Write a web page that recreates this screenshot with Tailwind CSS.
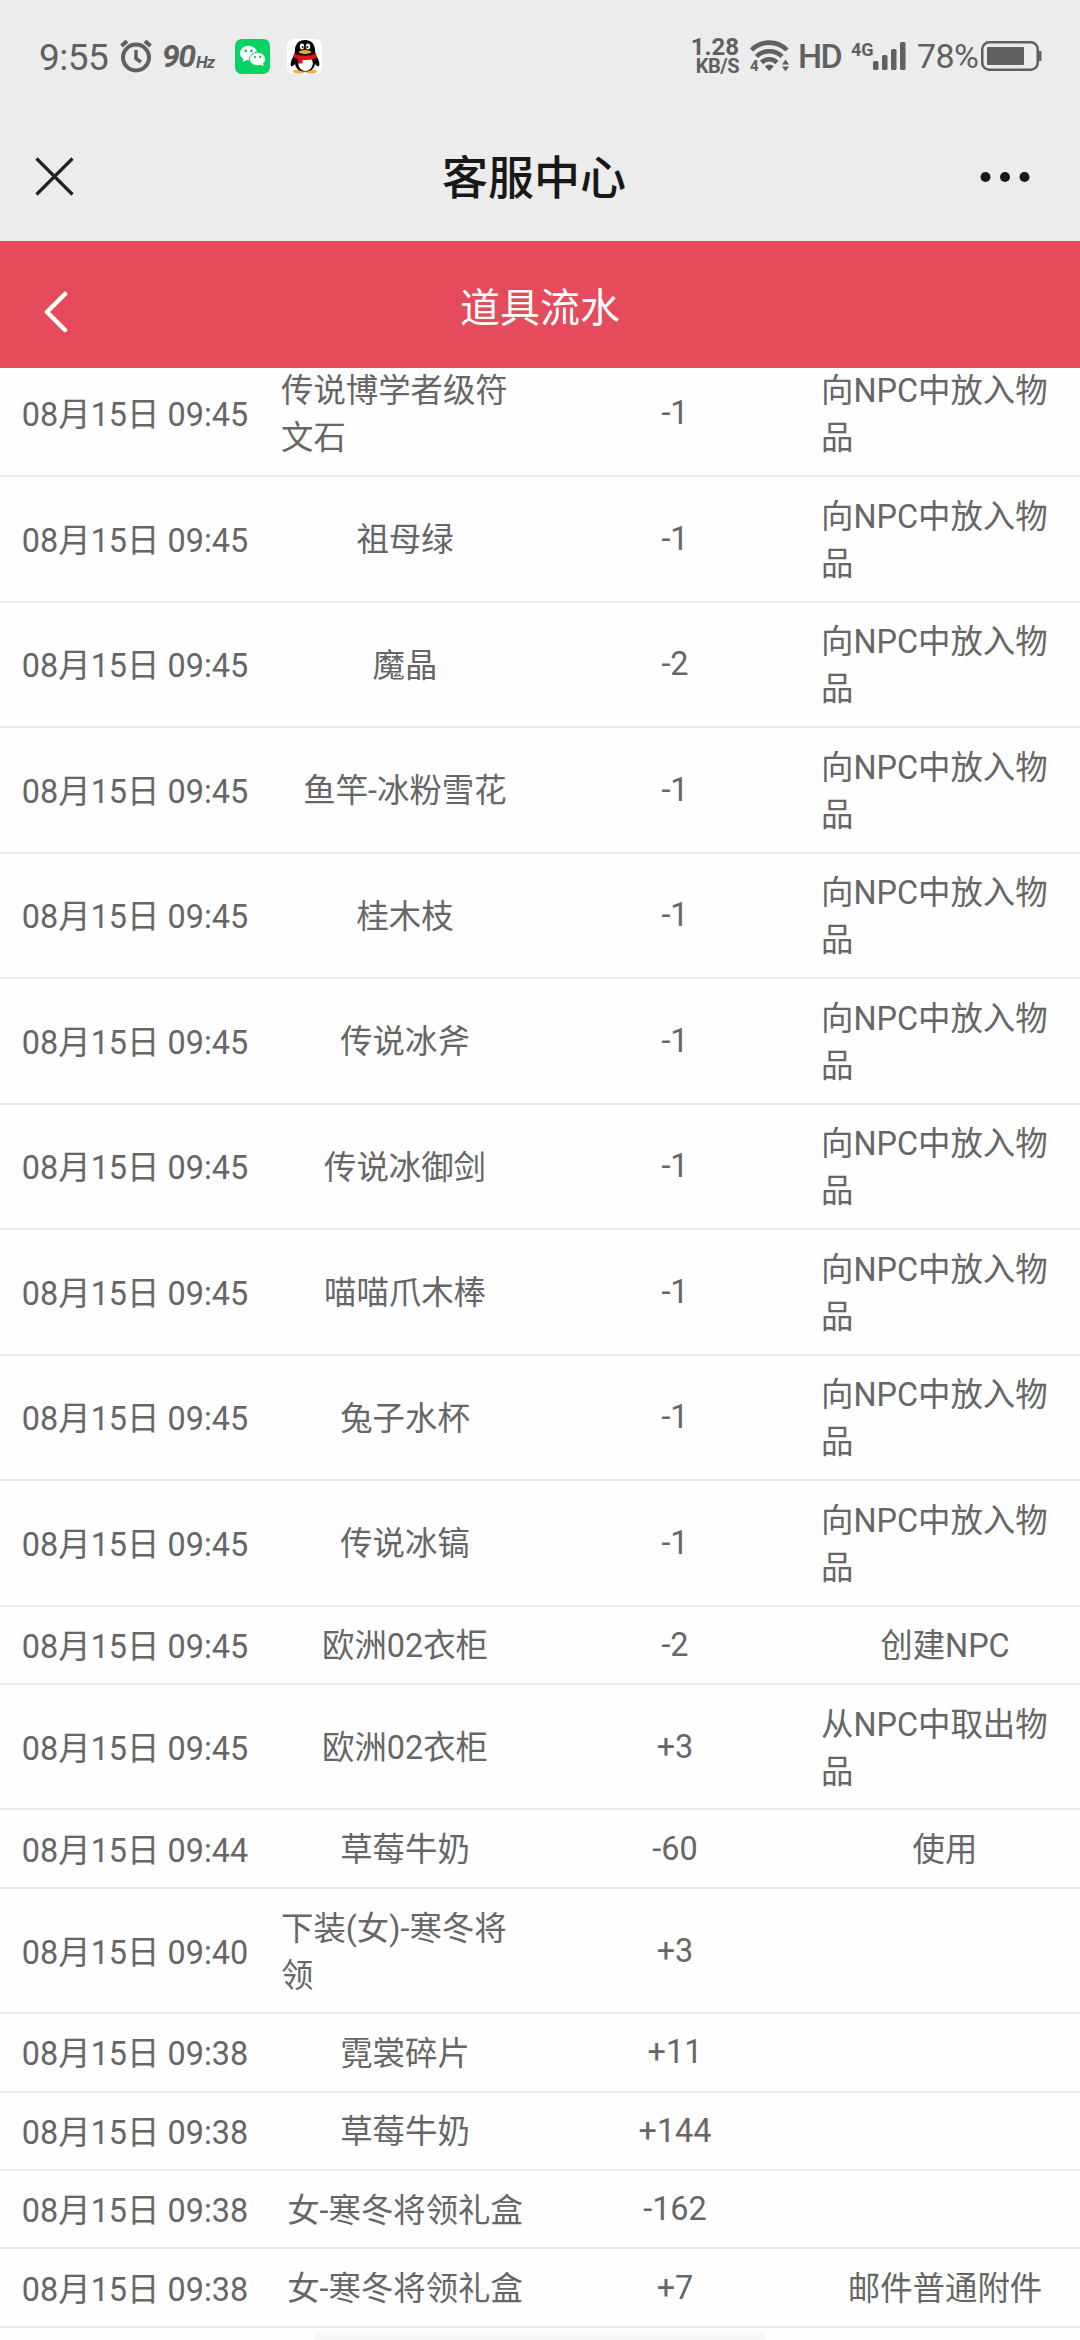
<!DOCTYPE html>
<html lang="zh-CN">
<head>
    <meta charset="UTF-8">
    <meta name="viewport" content="width=device-width, initial-scale=1.0">
    <title>客服中心</title>
    <script src="https://cdn.jsdelivr.net/npm/@tailwindcss/browser@4"></script>
</head>
<body class="relative w-[1080px] h-[2340px] overflow-hidden bg-[#fefefe] text-[#666] font-[Roboto,'Noto_Sans_CJK_SC',sans-serif]">
    <!-- Status bar -->
    <div class="h-[112px] bg-[#ececec] flex items-center justify-between pl-[39px] pr-[38px] text-[#606060]">
        <div class="flex items-center">
            <span class="text-[37px] leading-none w-[70px] pt-[2px] tracking-[-0.5px]">9:55</span>
            <svg class="ml-[11px] w-8 h-[34px]" viewBox="0 0 32 34" fill="none" stroke="#606060">
                <circle cx="16" cy="18.500" r="13" stroke-width="4"/>
                <path d="M16 11v8.500l5 3.500" stroke-width="3.500"/>
                <path d="M1.500 7L7 2M30.500 7L25 2" stroke-width="4"/>
            </svg>
            <span class="ml-[10px] w-[34px] text-[32px] leading-none font-bold italic tracking-[-1.5px]">90</span>
            <span class="w-[19px] text-[17px] leading-none font-bold italic pt-[12px] tracking-[-1px]">Hz</span>
            <!-- WeChat -->
            <svg class="ml-5 w-[35px] h-[35px]" viewBox="0 0 35 35">
                <rect width="35" height="35" rx="6.500" fill="#07d264"/>
                <ellipse cx="13.500" cy="14" rx="8.500" ry="7.300" fill="#fff"/>
                <path d="M8 18v5l5-2.500z" fill="#fff"/>
                <ellipse cx="22.500" cy="20" rx="8" ry="6.800" fill="#fff" stroke="#07d264"/>
                <path d="M25 25l3.500 2.500-.5-4z" fill="#fff"/>
                <g fill="#07a050">
                    <circle cx="10.800" cy="11.800" r="1.200"/>
                    <circle cx="16.500" cy="11.800" r="1.200"/>
                    <circle cx="20" cy="18" r="1"/>
                    <circle cx="25.200" cy="18" r="1"/>
                </g>
            </svg>
            <!-- QQ -->
            <svg class="ml-[17px] w-[35px] h-[35px]" viewBox="0 0 35 35">
                <rect width="35" height="35" rx="6.500" fill="#fff"/>
                <ellipse cx="12" cy="32.500" rx="6" ry="2" fill="#f6b04a"/>
                <ellipse cx="24" cy="32.500" rx="6" ry="2" fill="#f6b04a"/>
                <path d="M18 1c-6 0-10 4-10 10 0 3-1 5-2 7-2 3-3 7-2 9 1 1 3-1 4-2 1 5 4 7.500 10 7.500s9-2.500 10-7.500c1 1 3 3 4 2 1-2 0-6-2-9-1-2-2-4-2-7 0-6-4-10-10-10z" fill="#0a0608"/>
                <ellipse cx="18.500" cy="24.500" rx="7.300" ry="7.500" fill="#fff"/>
                <ellipse cx="15" cy="7.500" rx="2.200" ry="3" fill="#fff"/>
                <ellipse cx="21" cy="7.500" rx="2.200" ry="3" fill="#fff"/>
                <circle cx="15.700" cy="8" r="1" fill="#111"/>
                <circle cx="20.300" cy="8" r="1" fill="#111"/>
                <ellipse cx="18" cy="13" rx="6.200" ry="1.900" fill="#f6a623"/>
                <path d="M7 14.500c6 3 16 3 22 0l.8 4c-4 2.200-9.500 2.800-14.300 2.500V24.500H11V20c-2-.5-3.300-1-4.600-1.700z" fill="#e5101f"/>
            </svg>
        </div>
        <div class="flex items-center">
            <div class="flex flex-col items-end font-bold">
                <span class="text-[24px] leading-[20px]">1.28</span>
                <span class="text-[20px] leading-[18px] tracking-[-0.5px]">KB/S</span>
            </div>
            <svg class="ml-[11px] w-[40px] h-[32px] overflow-visible" viewBox="0 0 40 32" fill="none" stroke="#606060" stroke-width="4.600">
                <path d="M1.500 10a25 25 0 0 1 35.500 0"/>
                <path d="M6.500 16.500a18 18 0 0 1 25.500 0"/>
                <path d="M11.500 22.500a11 11 0 0 1 15.500 0"/>
                <path d="M19.300 31l-4.500-4.500a6.300 6.300 0 0 1 9 0z" fill="#606060" stroke="none"/>
                <path d="M35.500 19.500l3.500 5h-7zM35.500 31.500l3.500-5h-7z" fill="#606060" stroke="none"/>
                <text x="0" y="31" font-size="15" font-weight="700" fill="#606060" stroke="none">4</text>
            </svg>
            <span class="ml-[8px] w-[46px] text-[34px] leading-none font-medium tracking-[-1.5px]">HD</span>
            <span class="ml-[7px] w-[22px] text-[18px] leading-none font-bold pb-[13px]">4G</span>
            <svg class="w-[33px] h-[28px]" viewBox="0 0 33 28" fill="#606060">
                <rect x="0" y="19" width="5.500" height="9" rx="1.500"/>
                <rect x="9" y="13" width="5.500" height="15" rx="1.500"/>
                <rect x="18" y="7" width="5.500" height="21" rx="1.500"/>
                <rect x="27" y="0" width="5.500" height="28" rx="1.500"/>
            </svg>
            <span class="ml-[11px] w-[64px] text-[34px] leading-none tracking-[-0.6px]">78%</span>
            <svg class="w-[61px] h-[30px]" viewBox="0 0 61 30" fill="none">
                <rect x="1.250" y="1.250" width="55.500" height="27.500" rx="7" stroke="#606060" stroke-width="2.500"/>
                <rect x="6" y="6" width="37" height="18" rx="1" fill="#606060"/>
                <path d="M57 10h2.500q1 0 1 1v8q0 1-1 1H57z" fill="#606060"/>
            </svg>
        </div>
    </div>

    <!-- WebView title bar -->
    <header class="h-[129px] bg-[#ececec] grid grid-cols-[200px_1fr_200px] items-center text-[#181818]">
        <svg class="ml-[35px] w-[39px] h-[39px]" viewBox="0 0 39 39" fill="none" stroke="#222" stroke-width="3.200">
            <path d="M1.500 1.500l36 36M37.500 1.500l-36 36"/>
        </svg>
        <h1 class="text-[46px] leading-none font-medium text-center pr-[12px] pt-[2px]">客服中心</h1>
        <svg class="ml-[100px] w-[50px] h-[12px]" viewBox="0 0 50 12" fill="#181818">
            <circle cx="5.500" cy="6" r="5"/>
            <circle cx="25" cy="6" r="5"/>
            <circle cx="44.500" cy="6" r="5"/>
        </svg>
    </header>

    <!-- Page title -->
    <div class="relative z-10 h-[127px] bg-[#e64b5b] text-white grid grid-cols-[200px_1fr_200px] items-center">
        <svg class="ml-[44px] mt-[15px] w-[25px] h-[42px]" viewBox="0 0 25 42" fill="none" stroke="#fff" stroke-width="4.500" stroke-linecap="round" stroke-linejoin="round">
            <path d="M21 3L3 21l18 18"/>
        </svg>
        <h2 class="text-[40px] leading-none text-center pt-[8px]">道具流水</h2>
    </div>

    <!-- Item log -->
    <main id="log" class="-mt-[16.5px] text-[32.4px] leading-[47px]"></main>

    <div class="absolute bottom-0 left-[315px] w-[450px] h-[9px] rounded-t-sm bg-[#f7f8f9]"></div>

    <script>
        const PUT = '向NPC中放入物品';
        const rows = [
            ['08月15日 09:45', '传说博学者级符文石', '-1', PUT],
            ['08月15日 09:45', '祖母绿', '-1', PUT],
            ['08月15日 09:45', '魔晶', '-2', PUT],
            ['08月15日 09:45', '鱼竿-冰粉雪花', '-1', PUT],
            ['08月15日 09:45', '桂木枝', '-1', PUT],
            ['08月15日 09:45', '传说冰斧', '-1', PUT],
            ['08月15日 09:45', '传说冰御剑', '-1', PUT],
            ['08月15日 09:45', '喵喵爪木棒', '-1', PUT],
            ['08月15日 09:45', '兔子水杯', '-1', PUT],
            ['08月15日 09:45', '传说冰镐', '-1', PUT],
            ['08月15日 09:45', '欧洲02衣柜', '-2', '创建NPC'],
            ['08月15日 09:45', '欧洲02衣柜', '+3', '从NPC中取出物品'],
            ['08月15日 09:44', '草莓牛奶', '-60', '使用'],
            ['08月15日 09:40', '下装(女)-寒冬将领', '+3', ''],
            ['08月15日 09:38', '霓裳碎片', '+11', ''],
            ['08月15日 09:38', '草莓牛奶', '+144', ''],
            ['08月15日 09:38', '女-寒冬将领礼盒', '-162', ''],
            ['08月15日 09:38', '女-寒冬将领礼盒', '+7', '邮件普通附件']
        ];

        // Two-line cells make the whole row taller
        document.getElementById('log').innerHTML = rows.map(([time, item, count, source]) => {
            const tall = item.length > 8 || source.length > 7;
            return `
                <div class="${tall ? 'h-[125.5px]' : 'h-[78.4px]'} grid grid-cols-4 items-center border-b-2 border-[#e9e9e9]">
                    <div class="flex justify-center whitespace-nowrap pt-[5px]">${time}</div>
                    <div class="flex justify-center px-[11px] pt-[4px]"><span>${item}</span></div>
                    <div class="flex justify-center pt-px">${count}</div>
                    <div class="flex justify-center px-[11px] pt-[4px]"><span>${source}</span></div>
                </div>`;
        }).join('');
    </script>
</body>
</html>
